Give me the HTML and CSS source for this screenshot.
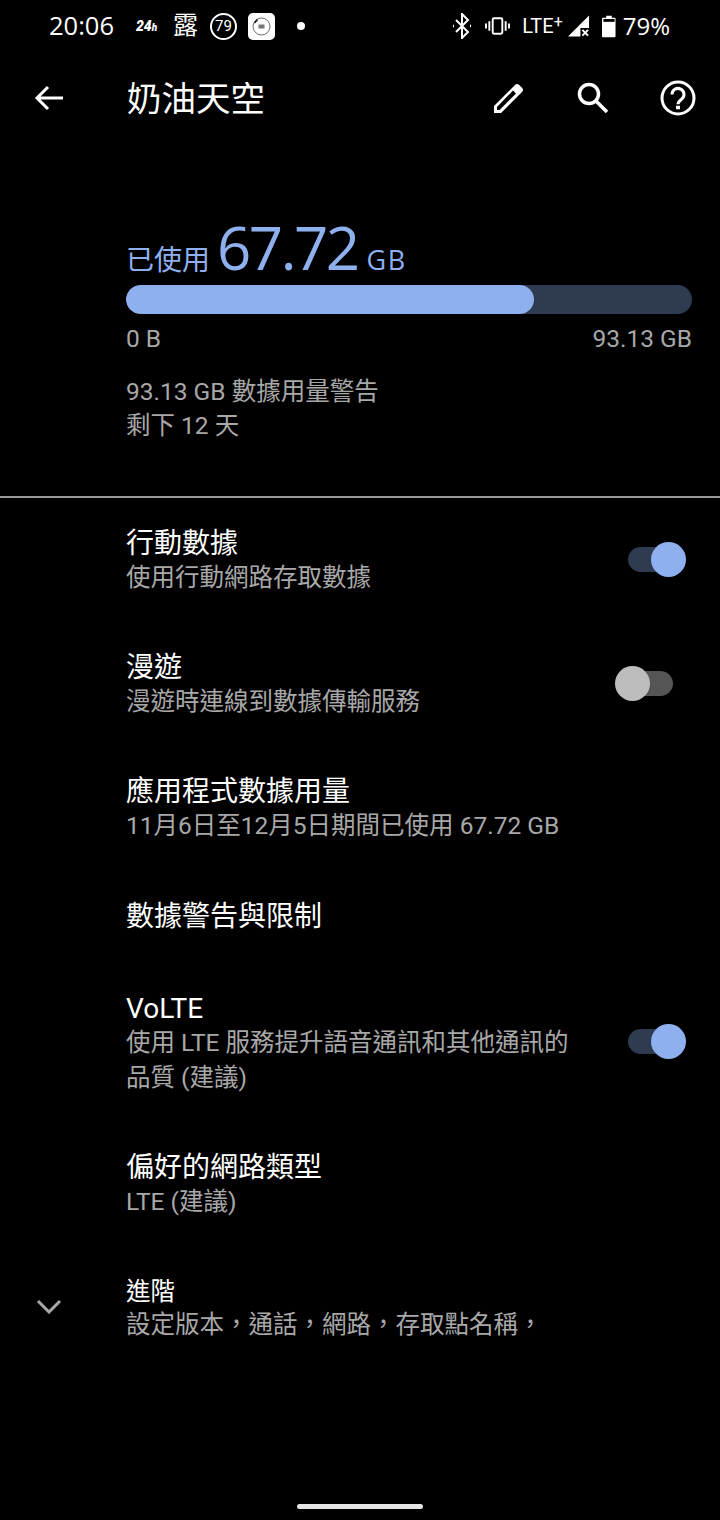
FILE: index.html
```html
<!DOCTYPE html>
<html lang="zh-Hant">
<head>
  <meta charset="UTF-8">
  <title>奶油天空</title>
  <link rel="stylesheet" href="styles.css">
</head>
<body>
<div class="phone">
  <div class="status-bar">
    <div class="status-left">
      <span class="clock">20:06</span>
      <span class="badge-24">24<small>h</small></span>
      <span class="dew">露</span>
      <span class="aqi">79</span>
      <svg class="app-tile" width="27" height="27" viewBox="0 0 27 27">
        <rect width="27" height="27" rx="5" fill="#fff"/>
        <circle cx="13.5" cy="13.5" r="8.5" fill="none" stroke="#444" stroke-width="0.8"/>
        <path d="M6.500 10l3-3.500" stroke="#222" stroke-width="1.800"/>
        <rect x="10.500" y="11.500" width="6" height="4" fill="#777"/>
      </svg>
      <span class="dot"></span>
    </div>
    <div class="status-right">
      <svg width="20" height="26" viewBox="0 0 20 26" fill="none" stroke="#fff" stroke-width="2">
        <path d="M4 7l12 12-6 6V1l6 6L4 19"/>
        <path d="M1 13h1M18 13h1" stroke-width="2.500"/>
      </svg>
      <svg class="vibrate" width="25" height="18" viewBox="0 0 26 18" fill="none" stroke="#fff" stroke-width="2">
        <rect x="8" y="1" width="10" height="16" rx="1.500"/>
        <path d="M4.500 4v10M21.500 4v10M1 6.500v5M25 6.500v5"/>
      </svg>
      <span class="lte">LTE<sup>+</sup></span>
      <svg class="signal" width="22" height="23" viewBox="0 0 23 23">
        <path d="M22 0v13h-9v9H0z" fill="#fff"/>
        <path d="M15 15l6 6M21 15l-6 6" stroke="#fff" stroke-width="2"/>
      </svg>
      <svg class="battery" width="14" height="23" viewBox="0 0 15 23">
        <path d="M4.500 0h6v2h3a1 1 0 0 1 1 1v19a1 1 0 0 1-1 1H1a1 1 0 0 1-1-1V3a1 1 0 0 1 1-1h3.500z" fill="#fff"/>
        <rect x="1.500" y="3.500" width="12" height="3" fill="#000"/>
      </svg>
      <span class="percent">79%</span>
    </div>
  </div>

  <header class="toolbar">
    <svg class="back" width="30" height="26" viewBox="0 0 30 26" fill="none" stroke="#fff" stroke-width="3">
      <path d="M29 13H3M14 2L3 13l11 11"/>
    </svg>
    <h1 class="toolbar-title">奶油天空</h1>
    <div class="toolbar-actions">
      <svg width="34" height="34" viewBox="0 0 34 34">
        <path fill="#fff" fill-rule="evenodd" d="M2 32v-7L23 4a3 3 0 0 1 4.200 0l2.800 2.800a3 3 0 0 1 0 4.200L9 32zM5 29h2.500L24 12.500 21 9.500 5 26z"/>
      </svg>
      <svg width="32" height="32" viewBox="0 0 32 32" fill="none" stroke="#fff" stroke-width="3.500">
        <circle cx="12" cy="12" r="9.500"/>
        <path d="M19 19l11 11"/>
      </svg>
      <svg width="36" height="36" viewBox="0 0 36 36" fill="none" stroke="#fff" stroke-width="3">
        <circle cx="18" cy="18" r="16"/>
        <path d="M12 14.500a6 6 0 1 1 9.500 4.800c-2 1.500-3.500 2.500-3.500 5"/>
        <path d="M16 27.500h4" stroke-width="3.500"/>
      </svg>
    </div>
  </header>

  <section class="summary">
    <div class="usage">
      <span class="usage-label">已使用</span>
      <span class="usage-value">67.72</span>
      <span class="usage-unit">GB</span>
    </div>
    <div class="bar"><div class="bar-fill" style="width: 72.1%"></div></div>
    <div class="bar-labels"><span>0 B</span><span>93.13 GB</span></div>
    <p class="summary-note">93.13 GB 數據用量警告<br>剩下 12 天</p>
  </section>

  <ul class="settings">
    <li class="row">
      <div class="row-text">
        <div class="row-title">行動數據</div>
        <div class="row-sub">使用行動網路存取數據</div>
      </div>
      <div class="toggle on"><span class="thumb"></span></div>
    </li>
    <li class="row">
      <div class="row-text">
        <div class="row-title">漫遊</div>
        <div class="row-sub">漫遊時連線到數據傳輸服務</div>
      </div>
      <div class="toggle off"><span class="thumb"></span></div>
    </li>
    <li class="row">
      <div class="row-text">
        <div class="row-title">應用程式數據用量</div>
        <div class="row-sub">11月6日至12月5日期間已使用 67.72 GB</div>
      </div>
    </li>
    <li class="row row-single">
      <div class="row-text">
        <div class="row-title">數據警告與限制</div>
      </div>
    </li>
    <li class="row">
      <div class="row-text">
        <div class="row-title">VoLTE</div>
        <div class="row-sub row-sub-wrap">使用 LTE 服務提升語音通訊和其他通訊的品質 (建議)</div>
      </div>
      <div class="toggle on"><span class="thumb"></span></div>
    </li>
    <li class="row">
      <div class="row-text">
        <div class="row-title">偏好的網路類型</div>
        <div class="row-sub">LTE (建議)</div>
      </div>
    </li>
    <li class="row row-advanced">
      <svg class="chevron" width="26" height="16" viewBox="0 0 26 16" fill="none" stroke="#a8a8a8" stroke-width="3">
        <path d="M2 3l11 11L24 3"/>
      </svg>
      <div class="row-text">
        <div class="row-title row-title-small">進階</div>
        <div class="row-sub">設定版本，通話，網路，存取點名稱，</div>
      </div>
    </li>
  </ul>

  <div class="nav-pill"></div>
</div>
</body>
</html>
```
FILE: styles.css
```css
* {
  box-sizing: border-box;
}
body {
  margin: 0;
  background: #000;
  color: #fff;
  font-family: Roboto, "Noto Sans CJK TC", sans-serif;
}
.phone {
  width: 720px;
  height: 1520px;
  display: flex;
  flex-direction: column;
  overflow: hidden;
}

/* status bar */
.status-bar {
  height: 52px;
  display: flex;
  justify-content: space-between;
  align-items: center;
  padding: 0 50px 0 49px;
}
.status-left, .status-right {
  display: flex;
  align-items: center;
}
.clock {
  width: 87px;
  padding-bottom: 2px;
  font-family: "Open Sans", sans-serif;
  font-size: 25.500px;
}
.badge-24 {
  width: 37px;
  font-size: 14px;
  font-weight: 900;
  font-style: italic;
}
.badge-24 small {
  font-size: 10px;
}
.dew {
  width: 37px;
  font-size: 25px;
  line-height: 26px;
}
.aqi {
  width: 27px;
  height: 27px;
  margin-right: 11px;
  border: 2px solid #fff;
  border-radius: 50%;
  font-size: 15px;
  line-height: 23px;
  text-align: center;
}
.dot {
  width: 8px;
  height: 8px;
  margin-left: 22px;
  background: #fff;
  border-radius: 50%;
}
.vibrate {
  margin-left: 13px;
}
.lte {
  margin-left: 12px;
  font-size: 20px;
  line-height: 26px;
}
.lte sup {
  font-size: 16px;
  line-height: 0;
  vertical-align: 6px;
}
.signal {
  margin-left: 5px;
}
.battery {
  margin-left: 12px;
}
.percent {
  margin-left: 7px;
  padding-bottom: 2px;
  font-family: "Open Sans", sans-serif;
  font-size: 24px;
}

/* toolbar */
.toolbar {
  height: 91px;
  display: flex;
  align-items: center;
  padding: 0 24px 0 34px;
}
.back {
  flex: none;
}
.toolbar-title {
  flex: 1;
  margin: 0 0 0 63px;
  padding-bottom: 4px;
  font-size: 34.500px;
  font-weight: 400;
}
.toolbar-actions {
  display: flex;
  align-items: center;
  gap: 51px;
}

/* usage summary */
.summary {
  height: 355px;
  padding: 66px 28px 0 126px;
  border-bottom: 2px solid #999;
}
.usage {
  display: flex;
  align-items: baseline;
  height: 76px;
  color: #8fb0ef;
}
.usage-label {
  font-size: 28px;
}
.usage-value {
  margin-left: 7px;
  font-family: "Open Sans", sans-serif;
  font-size: 60px;
  line-height: 76px;
  letter-spacing: -2.500px;
}
.usage-unit {
  margin-left: 9px;
  font-family: "Open Sans", sans-serif;
  font-size: 27px;
  letter-spacing: 1.500px;
}
.bar {
  height: 29px;
  background: #2e3b51;
  border-radius: 15px;
  overflow: hidden;
}
.bar-fill {
  height: 100%;
  background: #8fb0ef;
  border-radius: 15px;
}
.bar-labels {
  display: flex;
  justify-content: space-between;
  margin-top: 10px;
  font-size: 24.500px;
  line-height: 29px;
  color: #a8a8a8;
}
.summary-note {
  margin: 22px 0 0;
  font-size: 24.500px;
  line-height: 34px;
  color: #a8a8a8;
}

/* settings list */
.settings {
  margin: 0;
  padding: 0;
  list-style: none;
}
.row {
  display: flex;
  align-items: center;
  min-height: 91px;
  padding: 27px 34px 27px 126px;
}
.row-single {
  padding-top: 0;
  padding-bottom: 0;
  margin-bottom: 2px;
}
.row-text {
  flex: 1;
  padding-top: 1px;
  margin-bottom: -1px;
}
.row-title {
  font-size: 28px;
  line-height: 35px;
}
.row-sub {
  margin: -1px 0 1px;
  font-size: 24.500px;
  line-height: 35px;
  color: #a8a8a8;
}
.row-sub-wrap {
  width: 445px;
}
.row-advanced {
  position: relative;
}
.row-title-small {
  margin: 1px 0 0;
  font-size: 24.500px;
  line-height: 33px;
}
.chevron {
  position: absolute;
  left: 36px;
  top: 52px;
}

/* switches */
.toggle {
  flex: none;
  display: flex;
  align-items: center;
  width: 45px;
  height: 25px;
  margin: 0 13px 2px 0;
  border-radius: 13px;
}
.thumb {
  flex: none;
  width: 35px;
  height: 35px;
  border-radius: 50%;
}
.toggle.on {
  justify-content: flex-end;
  background: #2e3b51;
}
.toggle.on .thumb {
  margin-right: -13px;
  background: #8fb0ef;
}
.toggle.off {
  background: #555;
}
.toggle.off .thumb {
  margin-left: -13px;
  background: #bdbdbd;
}

.nav-pill {
  width: 126px;
  height: 5px;
  margin: auto auto 11px;
  background: #e6e6e6;
  border-radius: 3px;
}
```
